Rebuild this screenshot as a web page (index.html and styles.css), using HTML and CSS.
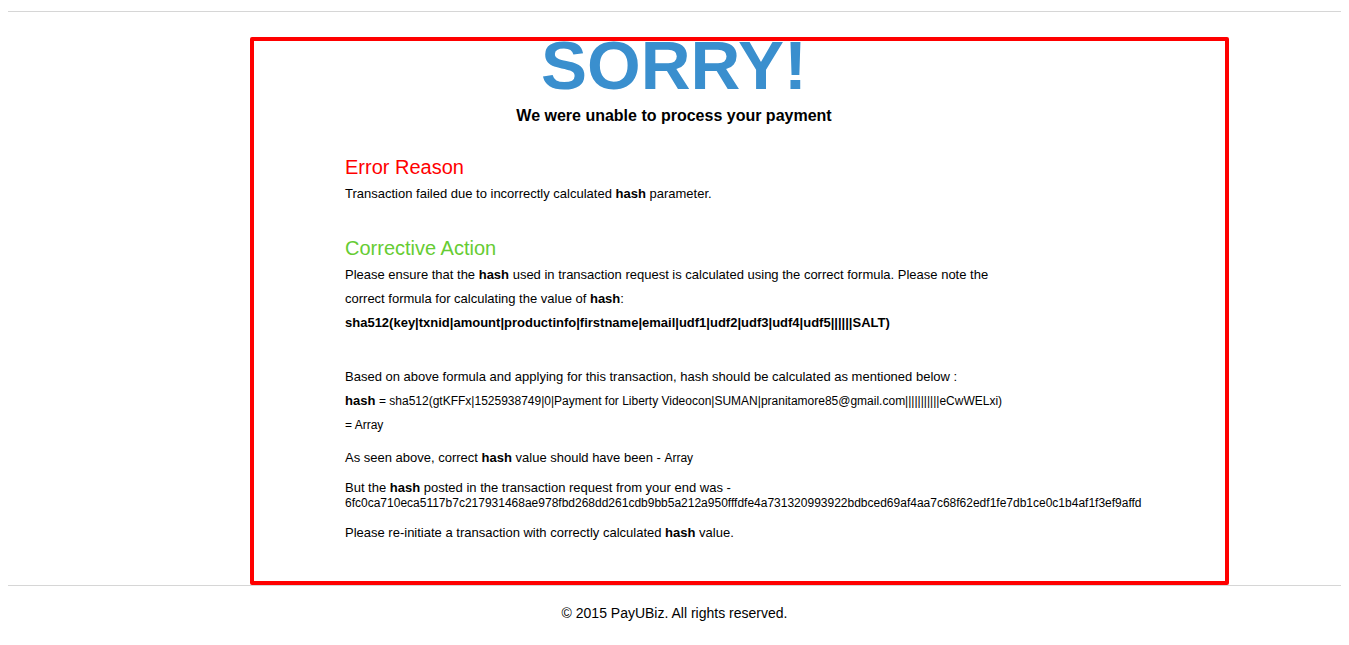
FILE: index.html
```html
<!DOCTYPE html>
<html>
<head>
<meta charset="utf-8">
<title>Payment Error</title>
<link rel="stylesheet" href="styles.css">
</head>
<body>
<div class="rule rule-top"></div>
<div class="box">
  <div class="head">
    <h1 class="sorry">SORRY!</h1>
    <p class="subtitle">We were unable to process your payment</p>
  </div>
  <div class="content">
    <h2 class="title title-error">Error Reason</h2>
    <p class="line">Transaction failed due to incorrectly calculated <b>hash</b> parameter.</p>

    <h2 class="title title-action">Corrective Action</h2>
    <p class="line">Please ensure that the <b>hash</b> used in transaction request is calculated using the correct formula. Please note the correct formula for calculating the value of <b>hash</b>:</p>
    <p class="line"><b>sha512(key|txnid|amount|productinfo|firstname|email|udf1|udf2|udf3|udf4|udf5||||||SALT)</b></p>

    <p class="line line-gap">Based on above formula and applying for this transaction, hash should be calculated as mentioned below :</p>
    <p class="line"><b>hash</b> <span class="small">= sha512(gtKFFx|1525938749|0|Payment for Liberty Videocon|SUMAN|pranitamore85@gmail.com|||||||||||eCwWELxi)</span></p>
    <p class="line"><span class="small">= Array</span></p>

    <p class="para para-first">As seen above, correct <b>hash</b> value should have been - <span class="small">Array</span></p>
    <p class="para">But the <b>hash</b> posted in the transaction request from your end was -<br><span class="small">6fc0ca710eca5117b7c217931468ae978fbd268dd261cdb9bb5a212a950fffdfe4a731320993922bdbced69af4aa7c68f62edf1fe7db1ce0c1b4af1f3ef9affd</span></p>
    <p class="para">Please re-initiate a transaction with correctly calculated <b>hash</b> value.</p>
  </div>
</div>
<div class="rule rule-bottom"></div>
<footer class="footer">© 2015 PayUBiz. All rights reserved.</footer>
</body>
</html>
```
FILE: styles.css
```css
html, body {
  background: #fff;
}
body {
  margin: 8px;
  font-family: "Liberation Sans", Arial, sans-serif;
  font-size: 13px;
  color: #000;
}
.rule {
  height: 0;
  border-top: 1px solid #d6d6d6;
}
.rule-top {
  margin-top: 3px;
}
.box {
  box-sizing: border-box;
  margin-top: 25px;
  margin-left: 242px;
  width: 979px;
  border: 4px solid #ff0000;
  border-radius: 2px;
  padding-bottom: 41px;
}
.head {
  width: 840px;
  text-align: center;
}
.sorry {
  margin: -7px 0 0;
  font-size: 69px;
  line-height: 64px;
  font-weight: bold;
  color: #3a8fce;
}
.subtitle {
  margin: 9px 0 0;
  font-size: 16px;
  line-height: 18px;
  font-weight: bold;
}
.content {
  padding-left: 91px;
  width: 662px;
}
.title {
  margin: 0;
  font-size: 20px;
  line-height: 24px;
  font-weight: normal;
}
.title-error {
  margin-top: 30px;
  margin-bottom: 3px;
  color: #ff0000;
}
.title-action {
  margin-top: 30px;
  margin-bottom: 3px;
  color: #66cc33;
}
.line {
  margin: 0;
  line-height: 24px;
}
.line-gap {
  margin-top: 30px;
}
.small {
  font-size: 12px;
}
.para {
  margin: 14px 0 0;
  line-height: 15px;
}
.para-first {
  margin-top: 13px;
}
.footer {
  margin-top: 19px;
  text-align: center;
  font-size: 14px;
  line-height: 16px;
}
```
